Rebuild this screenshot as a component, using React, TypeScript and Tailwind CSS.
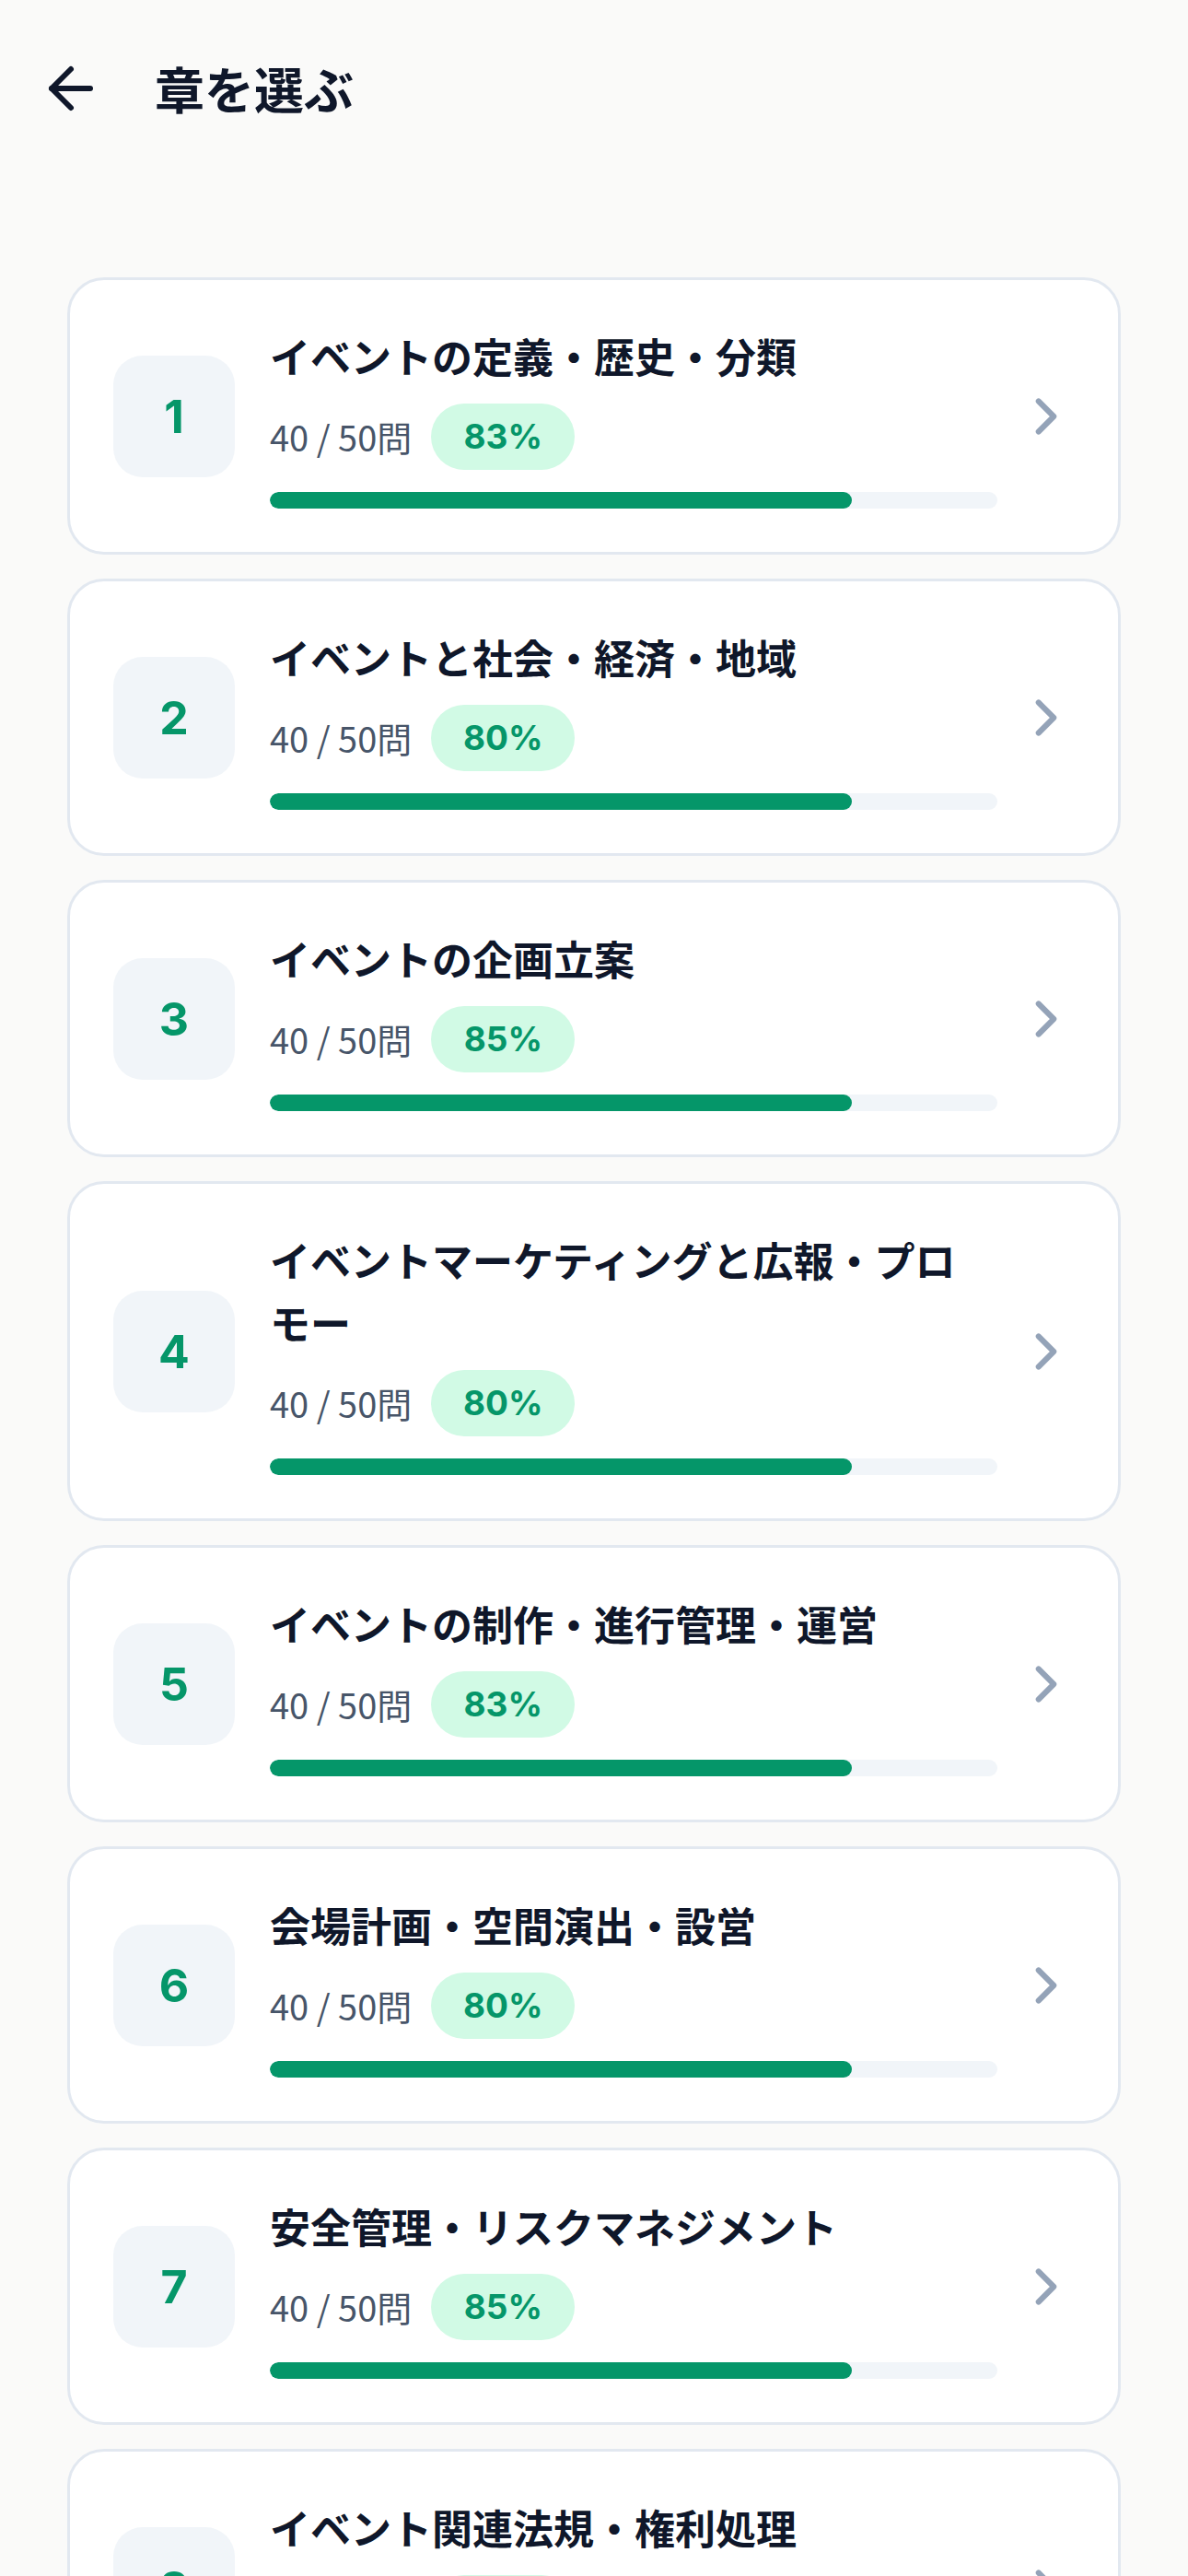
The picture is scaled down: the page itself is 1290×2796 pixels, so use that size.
import React from "react";
import { ArrowLeft, ChevronRight } from "lucide-react";

type Chapter = { no: number; lines: string[]; done: number; total: number; pct: number };

const chapters: Chapter[] = [
  { no: 1, lines: ["イベントの定義・歴史・分類"], done: 40, total: 50, pct: 83 },
  { no: 2, lines: ["イベントと社会・経済・地域"], done: 40, total: 50, pct: 80 },
  { no: 3, lines: ["イベントの企画立案"], done: 40, total: 50, pct: 85 },
  { no: 4, lines: ["イベントマーケティングと広報・プロ", "モー"], done: 40, total: 50, pct: 80 },
  { no: 5, lines: ["イベントの制作・進行管理・運営"], done: 40, total: 50, pct: 83 },
  { no: 6, lines: ["会場計画・空間演出・設営"], done: 40, total: 50, pct: 80 },
  { no: 7, lines: ["安全管理・リスクマネジメント"], done: 40, total: 50, pct: 85 },
  { no: 8, lines: ["イベント関連法規・権利処理"], done: 40, total: 50, pct: 83 },
];

const jp = "font-['Noto_Sans_CJK_JP',sans-serif]";
const num = "font-['Inter','Noto_Sans_CJK_JP',sans-serif]";

function ChapterCard({ c }: { c: Chapter }) {
  const width = (c.done / c.total) * 100;
  return (
    <div className="flex items-center rounded-[40px] border-[3px] border-[#e2e8f0] bg-white pl-[47px] pr-[45px] pt-[48px] pb-[47px]">
      <div className="flex h-[132px] w-[132px] shrink-0 items-center justify-center rounded-[32px] bg-[#f1f5f9]">
        <span className={`${num} text-[50px] font-bold leading-none text-[#059669]`}>{c.no}</span>
      </div>
      <div className="ml-[38px] flex min-w-0 flex-1 flex-col">
        <div className={`${jp} text-[44px] font-bold leading-[68px] text-[#0f172a]`}>
          {c.lines.map((l, i) => (
            <div key={i} className="whitespace-nowrap">
              {l}
            </div>
          ))}
        </div>
        <div className="mt-[18px] flex items-center gap-[21px]">
          <span className={`${jp} text-[38px] leading-none text-[#475569]`}>
            {c.done} / {c.total}問
          </span>
          <span
            className={`${num} flex h-[72px] w-[156px] items-center justify-center rounded-full bg-[#d1fae5] text-[37px] font-bold text-[#059669]`}
          >
            {c.pct}%
          </span>
        </div>
        <div className="mt-[24px] h-[18px] w-full overflow-hidden rounded-full bg-[#f1f5f9]">
          <div className="h-full rounded-full bg-[#059669]" style={{ width: `${width}%` }} />
        </div>
      </div>
      <div className="ml-[20px] shrink-0 text-[#94a3b8]">
        <ChevronRight size={66} strokeWidth={2.2} />
      </div>
    </div>
  );
}

export default function App() {
  return (
    <div className="min-h-screen bg-[#fafaf9]">
      <header className="flex h-[192px] items-center pl-[41px]">
        <ArrowLeft size={72} strokeWidth={2} className="text-[#0f172a]" />
        <h1 className={`${jp} ml-[55px] text-[54px] font-bold leading-none text-[#0f172a]`}>章を選ぶ</h1>
      </header>
      <main className="flex flex-col gap-[26px] px-[73px] pt-[109px] pb-[60px]">
        {chapters.map((c) => (
          <ChapterCard key={c.no} c={c} />
        ))}
      </main>
    </div>
  );
}
